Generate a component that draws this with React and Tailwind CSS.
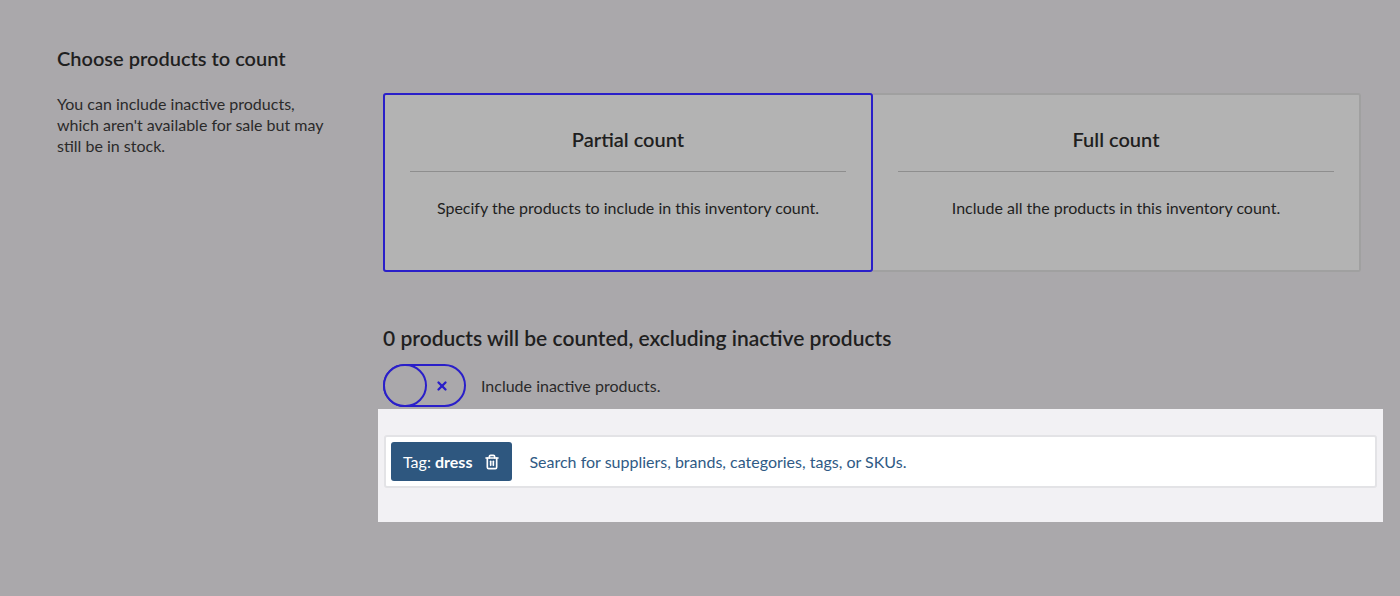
import { Trash2, X } from 'lucide-react'

export default function App() {
  return (
    <div className="min-h-screen bg-[#aaa8ab] font-[Lato,sans-serif] text-[#1f1f1f]">
      <div className="flex pt-[45px] pl-[57px] pr-[39px]">
        <div className="w-[326px] shrink-0">
          <h2 className="text-[20px] font-semibold leading-[26px]">Choose products to count</h2>
          <p className="mt-[22px] w-[275px] text-[16px] leading-[21px] text-[#2a2a2a]">
            You can include inactive products, which aren't available for sale but may still be in stock.
          </p>
        </div>
        <div className="flex-1">
          <div className="mt-[48px] flex h-[179px]">
            <div className="flex-1 rounded-[3px] border-2 border-[#2a1fc9] bg-[#b3b3b3] px-[25px] text-center">
              <div className="pt-[31px] text-[20px] font-semibold leading-[26px]">Partial count</div>
              <div className="mt-[19px] border-t border-[#8e8e8e]" />
              <div className="mt-[25px] text-[16px] leading-[21px]">Specify the products to include in this inventory count.</div>
            </div>
            <div className="flex-1 rounded-r-[3px] border-2 border-l-0 border-[#a0a0a0] bg-[#b3b3b3] px-[25px] text-center">
              <div className="pt-[31px] text-[20px] font-semibold leading-[26px]">Full count</div>
              <div className="mt-[19px] border-t border-[#8e8e8e]" />
              <div className="mt-[25px] text-[16px] leading-[21px]">Include all the products in this inventory count.</div>
            </div>
          </div>
          <h3 className="mt-[52px] text-[21px] font-semibold leading-[28px]">0 products will be counted, excluding inactive products</h3>
          <div className="mt-[12px] flex items-center gap-[15px]">
            <div className="relative h-[43px] w-[83px] rounded-full border-2 border-[#2a1fc9]">
              <div className="absolute -left-[2px] -top-[2px] h-[43px] w-[44px] rounded-full border-2 border-[#2a1fc9] bg-[#aaa8ab]" />
              <X className="absolute right-[15px] top-[13px] text-[#2a1fc9]" size={14} strokeWidth={4} />
            </div>
            <span className="text-[16px] text-[#2a2a2a]">Include inactive products.</span>
          </div>
          <div className="-mx-[5px] mr-[-22px] mt-[2px] bg-[#f2f1f4] px-[6px] pb-[34px] pt-[26px]">
            <div className="flex h-[53px] items-center rounded-[3px] border-2 border-[#e3e3e6] bg-white pl-[5px]">
              <div className="flex h-[39px] items-center gap-[12px] rounded-[3px] bg-[#2e577f] px-[12px] text-[16px] text-white">
                <span>Tag: <b className="font-bold">dress</b></span>
                <Trash2 size={16} strokeWidth={2.5} />
              </div>
              <span className="ml-[17px] text-[16px] text-[#2f5a85]">Search for suppliers, brands, categories, tags, or SKUs.</span>
            </div>
          </div>
        </div>
      </div>
    </div>
  )
}
